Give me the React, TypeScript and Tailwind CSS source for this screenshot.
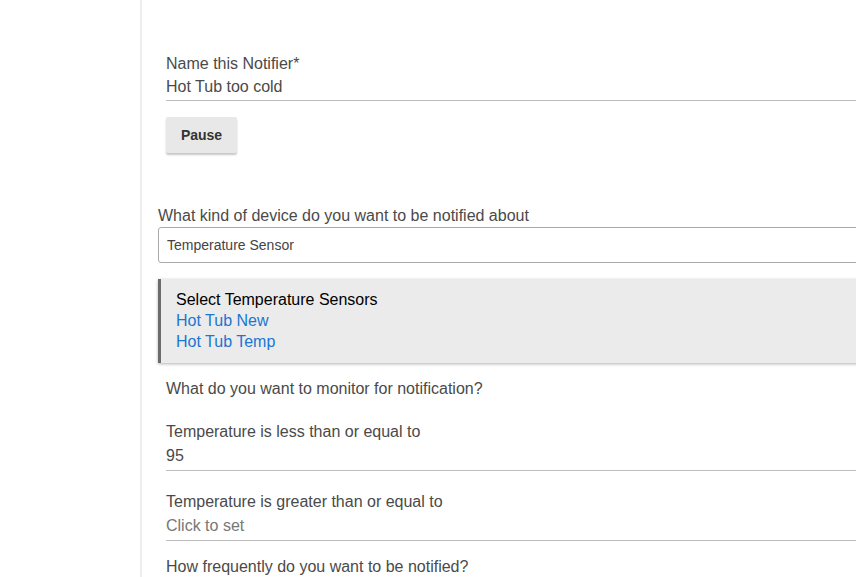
export default function App() {
  return (
    <div
      className="flex min-h-screen overflow-hidden bg-white text-[16px] text-[#4a4a4a]"
      style={{ fontFamily: '"Liberation Sans", Arial, sans-serif' }}
    >
      <div className="w-[140px] shrink-0" />
      <div className="w-[2px] shrink-0 bg-[#eeeeee]" />
      <main className="min-w-0 flex-1 overflow-hidden">
        <div className="-mr-6 pl-4 pt-[54px]">
          {/* name */}
          <div className="pl-2">
            <div className="leading-5">Name this Notifier*</div>
            <div className="mt-[3px] border-b border-[#bdbdbd] pb-[3px] leading-5">Hot Tub too cold</div>
            <button className="mt-4 h-9 w-[71px] rounded-[2px] bg-[#e8e8e8] text-[14px] font-bold text-[#333] shadow-[0_2px_2px_rgba(0,0,0,0.22)]">
              Pause
            </button>
          </div>

          {/* device type */}
          <div className="mt-[53px] leading-5">What kind of device do you want to be notified about</div>
          <div className="mt-[1px] flex h-9 items-center rounded-[3px] border border-[#aaaaaa] pl-2 text-[14px] text-[#444]">
            Temperature Sensor
          </div>

          <div className="mt-4 border-l-[3px] border-[#6b6b6b] bg-[#ebebeb] pb-[11px] pl-[15px] pt-[10px] leading-[21px] shadow-[0_1px_3px_rgba(0,0,0,0.3)]">
            <div className="text-black">Select Temperature Sensors</div>
            <div className="text-[#1a76d2]">Hot Tub New</div>
            <div className="text-[#1a76d2]">Hot Tub Temp</div>
          </div>

          <div className="pl-2">
            <div className="mt-4 leading-5">What do you want to monitor for notification?</div>

            <div className="mt-[23px] leading-5">Temperature is less than or equal to</div>
            <div className="mt-1 border-b border-[#bdbdbd] pb-1 leading-5">95</div>

            <div className="mt-[21px] leading-5">Temperature is greater than or equal to</div>
            <div className="mt-1 border-b border-[#bdbdbd] pb-1 leading-5 text-[#777]">Click to set</div>

            <div className="mt-4 leading-5">How frequently do you want to be notified?</div>
          </div>
        </div>
      </main>
    </div>
  );
}
